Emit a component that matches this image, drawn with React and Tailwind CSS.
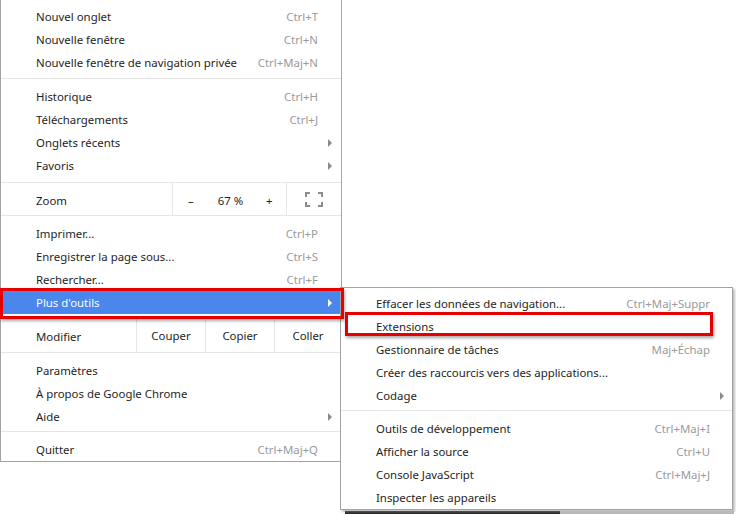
const mainSections = [
  { pad: 'pt-[5px] pb-[4px]', items: [
    { label: 'Nouvel onglet', key: 'Ctrl+T' },
    { label: 'Nouvelle fenêtre', key: 'Ctrl+N' },
    { label: 'Nouvelle fenêtre de navigation privée', key: 'Ctrl+Maj+N' },
  ] },
  { pad: 'pt-[6px] pb-[5px]', items: [
    { label: 'Historique', key: 'Ctrl+H' },
    { label: 'Téléchargements', key: 'Ctrl+J' },
    { label: 'Onglets récents', sub: true },
    { label: 'Favoris', sub: true },
  ] },
]

const subSections = [
  { pad: 'pt-[4px] pb-[3px]', items: [
    { label: 'Effacer les données de navigation...', key: 'Ctrl+Maj+Suppr' },
    { label: 'Extensions' },
    { label: 'Gestionnaire de tâches', key: 'Maj+Échap' },
    { label: 'Créer des raccourcis vers des applications...' },
    { label: 'Codage', sub: true },
  ] },
  { pad: 'pt-[6px]', items: [
    { label: 'Outils de développement', key: 'Ctrl+Maj+I' },
    { label: 'Afficher la source', key: 'Ctrl+U' },
    { label: 'Console JavaScript', key: 'Ctrl+Maj+J' },
    { label: 'Inspecter les appareils' },
  ] },
]

function Arrow({ color = '#8a8a8a' }) {
  return (
    <svg width="4" height="8" viewBox="0 0 4 8">
      <polygon points="0,0 4,4 0,8" fill={color} />
    </svg>
  )
}

function Row({ item, active, tail = 'w-[23px]' }) {
  return (
    <div className={`flex h-[23px] items-center pl-[35px] pt-[1px] ${active ? 'bg-[#4a86ec] text-white' : ''}`}>
      <span className="flex-1 whitespace-nowrap">{item.label}</span>
      {item.key && <span className="whitespace-nowrap text-[#9a9a9a]">{item.key}</span>}
      <span className={`flex ${tail} shrink-0 items-center pl-[10px]`}>
        {item.sub && <Arrow color={active ? '#ffffff' : '#8a8a8a'} />}
      </span>
    </div>
  )
}

const Line = () => <div className="h-px bg-[#e6e6e6]" />

function FullscreenIcon() {
  return (
    <svg width="18" height="15" viewBox="0 0 18 15" fill="none" stroke="#8c8c8c" strokeWidth="2">
      <path d="M1 5V1h4M13 1h4v4M17 10v4h-4M5 14H1v-4" />
    </svg>
  )
}

export default function App() {
  return (
    <div className="relative h-[514px] w-[736px] overflow-hidden bg-white font-['Noto_Sans',sans-serif] text-[11.4px] leading-none text-[#1e1e1e]">
      {/* Main menu */}
      <div className="w-[342px] border-x border-b border-[#a3a3a3] bg-white">
        {mainSections.map((s, i) => (
          <div key={i}>
            <div className={s.pad}>
              {s.items.map((it) => <Row key={it.label} item={it} />)}
            </div>
            <Line />
          </div>
        ))}

        <div className="flex h-[32px] items-center">
          <span className="w-[171px] pl-[35px] pt-[3px]">Zoom</span>
          <div className="flex h-full w-[115px] items-center border-x border-[#e6e6e6] pt-[3px]">
            <span className="w-[36px] text-center">–</span>
            <span className="w-[44px] text-center">67 %</span>
            <span className="w-[34px] text-center">+</span>
          </div>
          <div className="flex flex-1 items-center justify-center">
            <FullscreenIcon />
          </div>
        </div>
        <Line />

        <div className="pt-[6px] pb-[3px]">
          <Row item={{ label: 'Imprimer...', key: 'Ctrl+P' }} />
          <Row item={{ label: 'Enregistrer la page sous...', key: 'Ctrl+S' }} />
          <Row item={{ label: 'Rechercher...', key: 'Ctrl+F' }} />
          <Row item={{ label: "Plus d'outils", sub: true }} active />
        </div>
        <Line />

        <div className="flex h-[34px] items-center">
          <span className="w-[135px] pl-[35px] pt-[3px]">Modifier</span>
          <span className="flex h-full w-[69px] items-center justify-center border-l border-[#e6e6e6] pt-[2px]">Couper</span>
          <span className="flex h-full w-[69px] items-center justify-center border-l border-[#e6e6e6] pt-[2px]">Copier</span>
          <span className="flex h-full flex-1 items-center justify-center border-l border-[#e6e6e6] pt-[2px]">Coller</span>
        </div>
        <Line />

        <div className="pt-[6px] pb-[3px]">
          <Row item={{ label: 'Paramètres' }} />
          <Row item={{ label: 'À propos de Google Chrome' }} />
          <Row item={{ label: 'Aide', sub: true }} />
        </div>
        <Line />

        <div className="pt-[6px]">
          <Row item={{ label: 'Quitter', key: 'Ctrl+Maj+Q' }} />
        </div>
      </div>

      {/* Sub menu */}
      <div className="absolute left-[340px] top-[287px] w-[393px] border border-[#a3a3a3] bg-white shadow-[2px_2px_2px_rgba(0,0,0,0.25)]">
        {subSections.map((s, i) => (
          <div key={i}>
            {i > 0 && <Line />}
            <div className={s.pad}>
              {s.items.map((it) => <Row key={it.label} item={it} tail="w-[22px]" />)}
            </div>
          </div>
        ))}
      </div>

      {/* annotation boxes */}
      <div className="absolute left-0 top-[288px] h-[31px] w-[344px] border-[3px] border-[#e60000] shadow-[1px_2px_3px_rgba(0,0,0,0.35)]" />
      <div className="absolute left-[345px] top-[312px] h-[24px] w-[368px] border-[3px] border-[#e60000] shadow-[1px_2px_3px_rgba(0,0,0,0.35)]" />

      {/* page behind */}
      <div className="absolute left-[345px] top-[511px] h-[3px] w-[215px] bg-gradient-to-b from-[#555] to-[#222]" />
      <div className="absolute left-[560px] top-[511px] h-[3px] w-[174px] bg-[#b8b8b8]" />
    </div>
  )
}
